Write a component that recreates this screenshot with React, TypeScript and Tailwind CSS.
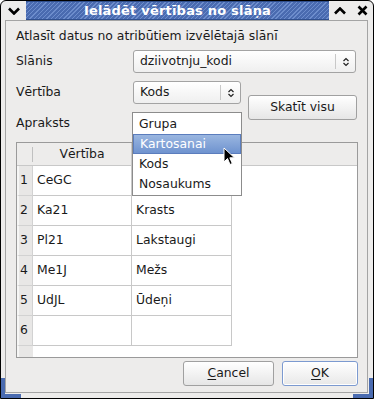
const ComboArrow = () => (
  <svg width="8" height="10" viewBox="0 0 8 10" fill="none" stroke="#222" strokeWidth="1.2">
    <path d="M1.5 4 L4 1.5 L6.5 4" />
    <path d="M1.5 6 L4 8.5 L6.5 6" />
  </svg>
);

const Combo = ({ value, width }: { value: string; width: string }) => (
  <div className={`${width} h-[23px] flex items-center rounded-[3px] border border-[#a3a3a3] bg-gradient-to-b from-white to-[#efefef]`}>
    <span className="flex-1 pl-[6px] truncate">{value}</span>
    <div className="h-[15px] border-l border-[#c8c8c8]" />
    <div className="w-[19px] flex justify-center">
      <ComboArrow />
    </div>
  </div>
);

const rows = [
  ["1", "CeGC", ""],
  ["2", "Ka21", "Krasts"],
  ["3", "Pl21", "Lakstaugi"],
  ["4", "Me1J", "Mežs"],
  ["5", "UdJL", "Ūdeņi"],
  ["6", "", ""],
];

const App = () => {
  return (
    <div className="relative w-[374px] h-[399px] border border-black rounded-t-[6px] overflow-hidden bg-[#edeceb] flex flex-col text-[12.4px] text-[#1a1a1a] font-['DejaVu_Sans',sans-serif]">
      {/* title bar */}
      <div className="h-[19px] flex">
        <div className="w-[25px] flex items-center justify-center">
          <svg width="12" height="8" viewBox="0 0 12 8">
            <path d="M1 1.5 L6 6.5 L11 1.5" stroke="#000" strokeWidth="2.6" fill="none" />
          </svg>
        </div>
        <div className="flex-1 flex items-center justify-center border-y border-[#2f4f8e] bg-[repeating-linear-gradient(135deg,#4a6bb0_0px,#4a6bb0_2px,#6d8dcc_2px,#6d8dcc_3px)]">
          <span className="text-white font-bold text-[13px] leading-none tracking-[0.2px]">Ielādēt vērtības no slāņa</span>
        </div>
        <div className="w-[22px] flex items-center justify-center">
          <svg width="12" height="8" viewBox="0 0 12 8">
            <path d="M1 6.5 L6 1.5 L11 6.5" stroke="#000" strokeWidth="2.6" fill="none" />
          </svg>
        </div>
        <div className="w-[22px] flex items-center justify-center">
          <svg width="11" height="11" viewBox="0 0 11 11">
            <path d="M1.5 1.5 L9.5 9.5 M9.5 1.5 L1.5 9.5" stroke="#000" strokeWidth="2.6" fill="none" />
          </svg>
        </div>
      </div>

      {/* frame */}
      <div className="flex-1 flex flex-col pl-[4px] pr-[5px] pb-[5px]">
        <div className="flex-1 flex flex-col border border-[#a4a4a4] pl-[10px] pr-[9px]">
          <div className="mt-[7px] h-[16px] leading-[16px]">Atlasīt datus no atribūtiem izvēlētajā slānī</div>

          <div className="mt-[6px] flex items-center">
            <span className="w-[117px]">Slānis</span>
            <Combo value="dziivotnju_kodi" width="w-[223px]" />
          </div>

          <div className="mt-[8px] flex">
            <div className="flex flex-col">
              <div className="flex items-center">
                <span className="w-[117px]">Vērtība</span>
                <Combo value="Kods" width="w-[108px]" />
              </div>
              <div className="mt-[11px] h-[16px] leading-[16px]">Apraksts</div>
            </div>
            <button className="ml-[7px] mt-[14px] w-[109px] h-[25px] rounded-[3px] border border-[#a0a0a0] bg-gradient-to-b from-white to-[#e6e6e6]">
              Skatīt visu
            </button>
          </div>

          {/* table */}
          <div className="mt-[11px] w-[342px] h-[216px] border border-[#9a9a9a] bg-white flex flex-col">
            <div className="h-[23px] flex bg-[#edeceb] border-b border-[#c8c8c8]">
              <div className="w-[16px] flex items-center justify-end">
                <div className="h-[15px] border-l border-[#c0c0c0]" />
              </div>
              <div className="w-[99px] flex items-center justify-center border-r border-[#c8c8c8]">Vērtība</div>
              <div className="w-[100px] border-r border-[#c8c8c8]" />
              <div className="flex-1" />
            </div>
            {rows.map(([n, a, b]) => (
              <div key={n} className="h-[30px] flex">
                <div className="w-[16px] flex items-center justify-end pr-[4px] bg-[#e8e7e6] border-b border-r border-[#d2d2d2] border-l-2 border-l-[#f6f6f5]">{n}</div>
                <div className="w-[99px] flex items-center pl-[4px] border-b border-r border-[#c8c8c8]">{a}</div>
                <div className="w-[100px] flex items-center pl-[4px] border-b border-r border-[#c8c8c8]">{b}</div>
                <div className="flex-1" />
              </div>
            ))}
            <div className="flex-1 flex">
              <div className="w-[16px] bg-[#e8e7e6] border-l-2 border-l-[#f6f6f5]" />
            </div>
          </div>

          <div className="mt-[3px] flex justify-end gap-[8px]">
            <button className="w-[91px] h-[25px] rounded-[3px] border border-[#a0a0a0] bg-gradient-to-b from-white to-[#e6e6e6]">
              <span className="underline underline-offset-2">C</span>ancel
            </button>
            <button className="w-[76px] h-[25px] rounded-[3px] border border-[#7c9ad0] bg-gradient-to-b from-white to-[#e8e8e8] shadow-[inset_0_0_0_1px_#ffffff]">
              <span className="underline underline-offset-2">O</span>K
            </button>
          </div>
        </div>
      </div>

      {/* resize grip corners */}
      <div className="absolute left-0 bottom-0 w-[20px] h-[20px] border-l-[4px] border-b-[4px] border-[#4a6bb0]" />
      <div className="absolute right-0 bottom-0 w-[20px] h-[20px] border-r-[4px] border-b-[4px] border-[#4a6bb0]" />

      {/* open dropdown list */}
      <div className="absolute left-[131px] top-[111px] w-[110px] pt-[1px] pb-[1px] bg-white border border-[#8c8c8c] flex flex-col">
        <div className="h-[20px] flex items-center pl-[6px]">Grupa</div>
        <div className="h-[20px] flex items-center pl-[6px] text-white border border-[#5b7dbd] bg-gradient-to-b from-[#9ab6e0] to-[#6f93cf]">Kartosanai</div>
        <div className="h-[20px] flex items-center pl-[6px]">Kods</div>
        <div className="h-[20px] flex items-center pl-[6px]">Nosaukums</div>
      </div>

      {/* mouse pointer */}
      <svg className="absolute left-[222px] top-[146px]" width="13" height="19" viewBox="0 0 13 19">
        <path d="M1 1 L1 15 L4.5 11.5 L7 17.5 L9.3 16.5 L6.8 10.8 L11.5 10.8 Z" fill="#000" stroke="#fff" strokeWidth="1" strokeLinejoin="round" />
      </svg>
    </div>
  );
};

export default App;
